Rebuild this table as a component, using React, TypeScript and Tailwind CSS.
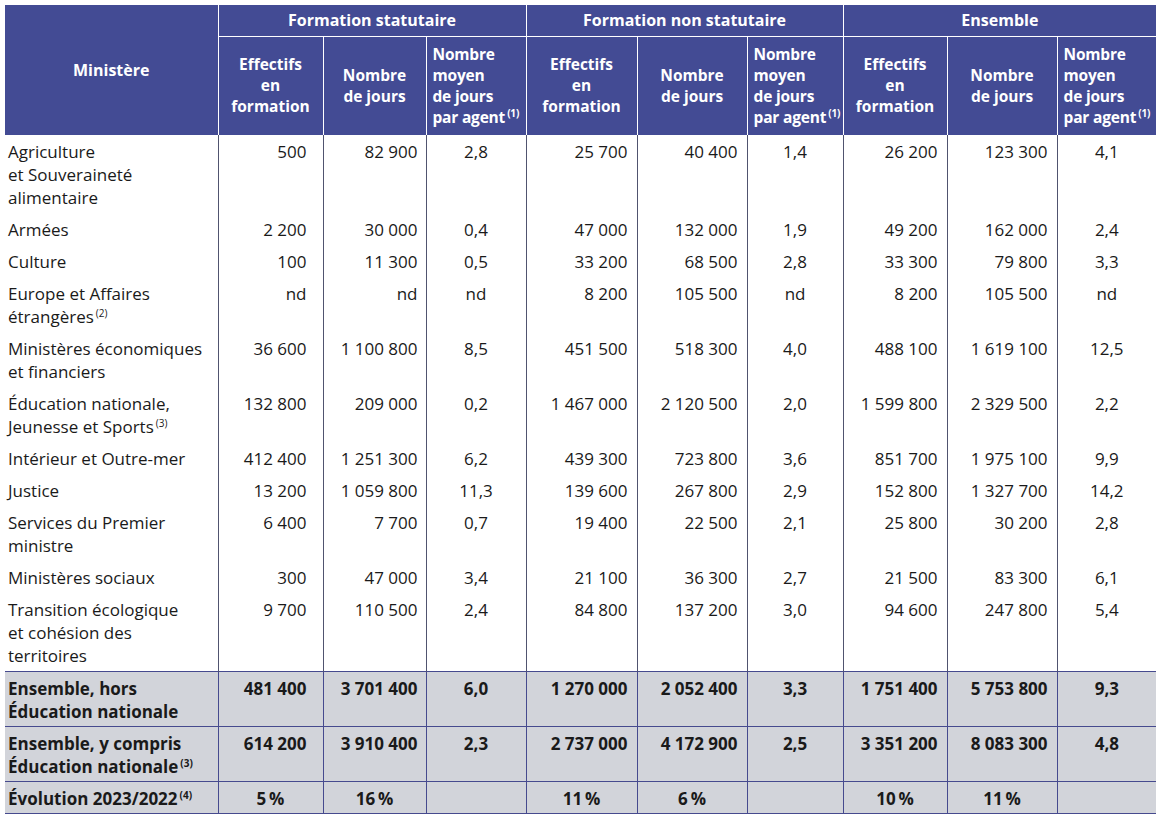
import React from 'react';

const widths = [213, 105, 103, 100, 111, 110, 96, 104, 110, 99];

// colonnes entières alignées à droite, moyennes centrées
const numPad = ['', 'pr-[16px]', 'pr-[8px]', '', 'pr-[9px]', 'pr-[9px]', '', 'pr-[9px]', 'pr-[9px]', ''];
const centered = [false, false, false, true, false, false, true, false, false, true];

type Row = { label: React.ReactNode; values: string[]; h: string };

const Sup = ({ n, bold }: { n: number; bold?: boolean }) => (
  <span className={`relative -top-[6px] ml-[2px] text-[10px] leading-none ${bold ? 'font-bold' : 'font-normal'}`}>
    ({n})
  </span>
);

const rows: Row[] = [
  { label: <>Agriculture<br />et Souveraineté<br />alimentaire</>, values: ['500', '82 900', '2,8', '25 700', '40 400', '1,4', '26 200', '123 300', '4,1'], h: 'h-[78px]' },
  { label: 'Armées', values: ['2 200', '30 000', '0,4', '47 000', '132 000', '1,9', '49 200', '162 000', '2,4'], h: 'h-[32px]' },
  { label: 'Culture', values: ['100', '11 300', '0,5', '33 200', '68 500', '2,8', '33 300', '79 800', '3,3'], h: 'h-[32px]' },
  { label: <>Europe et Affaires<br />étrangères<Sup n={2} /></>, values: ['nd', 'nd', 'nd', '8 200', '105 500', 'nd', '8 200', '105 500', 'nd'], h: 'h-[55px]' },
  { label: <>Ministères économiques<br />et financiers</>, values: ['36 600', '1 100 800', '8,5', '451 500', '518 300', '4,0', '488 100', '1 619 100', '12,5'], h: 'h-[55px]' },
  { label: <>Éducation nationale,<br />Jeunesse et Sports<Sup n={3} /></>, values: ['132 800', '209 000', '0,2', '1 467 000', '2 120 500', '2,0', '1 599 800', '2 329 500', '2,2'], h: 'h-[55px]' },
  { label: 'Intérieur et Outre-mer', values: ['412 400', '1 251 300', '6,2', '439 300', '723 800', '3,6', '851 700', '1 975 100', '9,9'], h: 'h-[32px]' },
  { label: 'Justice', values: ['13 200', '1 059 800', '11,3', '139 600', '267 800', '2,9', '152 800', '1 327 700', '14,2'], h: 'h-[32px]' },
  { label: <>Services du Premier<br />ministre</>, values: ['6 400', '7 700', '0,7', '19 400', '22 500', '2,1', '25 800', '30 200', '2,8'], h: 'h-[55px]' },
  { label: 'Ministères sociaux', values: ['300', '47 000', '3,4', '21 100', '36 300', '2,7', '21 500', '83 300', '6,1'], h: 'h-[32px]' },
  { label: <>Transition écologique<br />et cohésion des<br />territoires</>, values: ['9 700', '110 500', '2,4', '84 800', '137 200', '3,0', '94 600', '247 800', '5,4'], h: 'h-[78px]' },
];

const totals: Row[] = [
  { label: <>Ensemble, hors<br />Éducation nationale</>, values: ['481 400', '3 701 400', '6,0', '1 270 000', '2 052 400', '3,3', '1 751 400', '5 753 800', '9,3'], h: 'h-[55px]' },
  { label: <>Ensemble, y compris<br />Éducation nationale<Sup n={3} bold /></>, values: ['614 200', '3 910 400', '2,3', '2 737 000', '4 172 900', '2,5', '3 351 200', '8 083 300', '4,8'], h: 'h-[55px]' },
];

const evolution = ['5\u2009%', '16\u2009%', '', '11\u2009%', '6\u2009%', '', '10\u2009%', '11\u2009%', ''];

function SubHeads() {
  return (
    <>
      <th className="border-l border-t border-white font-bold text-center align-middle">
        Effectifs<br />en<br />formation
      </th>
      <th className="border-l border-t border-white font-bold text-center align-middle">
        Nombre<br />de jours
      </th>
      <th className="border-l border-t border-white font-bold text-left align-middle pl-[6px] whitespace-nowrap tracking-[-0.2px]">
        Nombre<br />moyen<br />de jours<br />par agent<Sup n={1} bold />
      </th>
    </>
  );
}

export default function App() {
  return (
    <div className="min-h-screen bg-white p-[5px] text-[#1a1a1a]" style={{ fontFamily: '"Open Sans", "Liberation Sans", sans-serif' }}>
      <table className="table-fixed border-collapse w-[1151px]">
        <colgroup>
          {widths.map((w, i) => (
            <col key={i} style={{ width: w }} />
          ))}
        </colgroup>
        <thead className="bg-[#434b94] text-white text-[15.5px] leading-[21px]">
          <tr className="h-[31px]">
            <th rowSpan={2} className="font-bold text-center align-middle text-[16px]">Ministère</th>
            <th colSpan={3} className="border-l border-white font-bold text-center text-[16px]">Formation statutaire</th>
            <th colSpan={3} className="border-l border-white font-bold text-center text-[16px]">Formation non statutaire</th>
            <th colSpan={3} className="border-l border-white font-bold text-center text-[16px]">Ensemble</th>
          </tr>
          <tr className="h-[99px]">
            <SubHeads />
            <SubHeads />
            <SubHeads />
          </tr>
        </thead>
        <tbody className="text-[17px] leading-[23px]">
          {rows.map((r, ri) => (
            <tr key={ri} className={r.h}>
              <td className="align-top pt-[5px] pl-[3px] whitespace-nowrap">{r.label}</td>
              {r.values.map((v, i) => (
                <td
                  key={i}
                  className={`align-top pt-[5px] border-l border-[#50536f] whitespace-nowrap ${
                    centered[i + 1] ? 'text-center' : `text-right ${numPad[i + 1]}`
                  }`}
                >
                  {v}
                </td>
              ))}
            </tr>
          ))}
          {totals.map((r, ri) => (
            <tr key={ri} className={`${r.h} bg-[#d2d4da] font-bold border-t border-[#464a8e]`}>
              <td className="align-top pt-[5px] pl-[3px] whitespace-nowrap">{r.label}</td>
              {r.values.map((v, i) => (
                <td
                  key={i}
                  className={`align-top pt-[5px] border-l border-[#464a8e] whitespace-nowrap ${
                    centered[i + 1] ? 'text-center' : `text-right ${numPad[i + 1]}`
                  }`}
                >
                  {v}
                </td>
              ))}
            </tr>
          ))}
          <tr className="h-[32px] bg-[#d2d4da] font-bold border-t border-b border-[#464a8e]">
            <td className="align-top pt-[5px] pl-[3px] whitespace-nowrap">
              Évolution 2023/2022<Sup n={4} bold />
            </td>
            {evolution.map((v, i) => (
              <td key={i} className="align-top pt-[5px] border-l border-[#464a8e] text-center whitespace-nowrap">
                {v}
              </td>
            ))}
          </tr>
        </tbody>
      </table>
    </div>
  );
}
